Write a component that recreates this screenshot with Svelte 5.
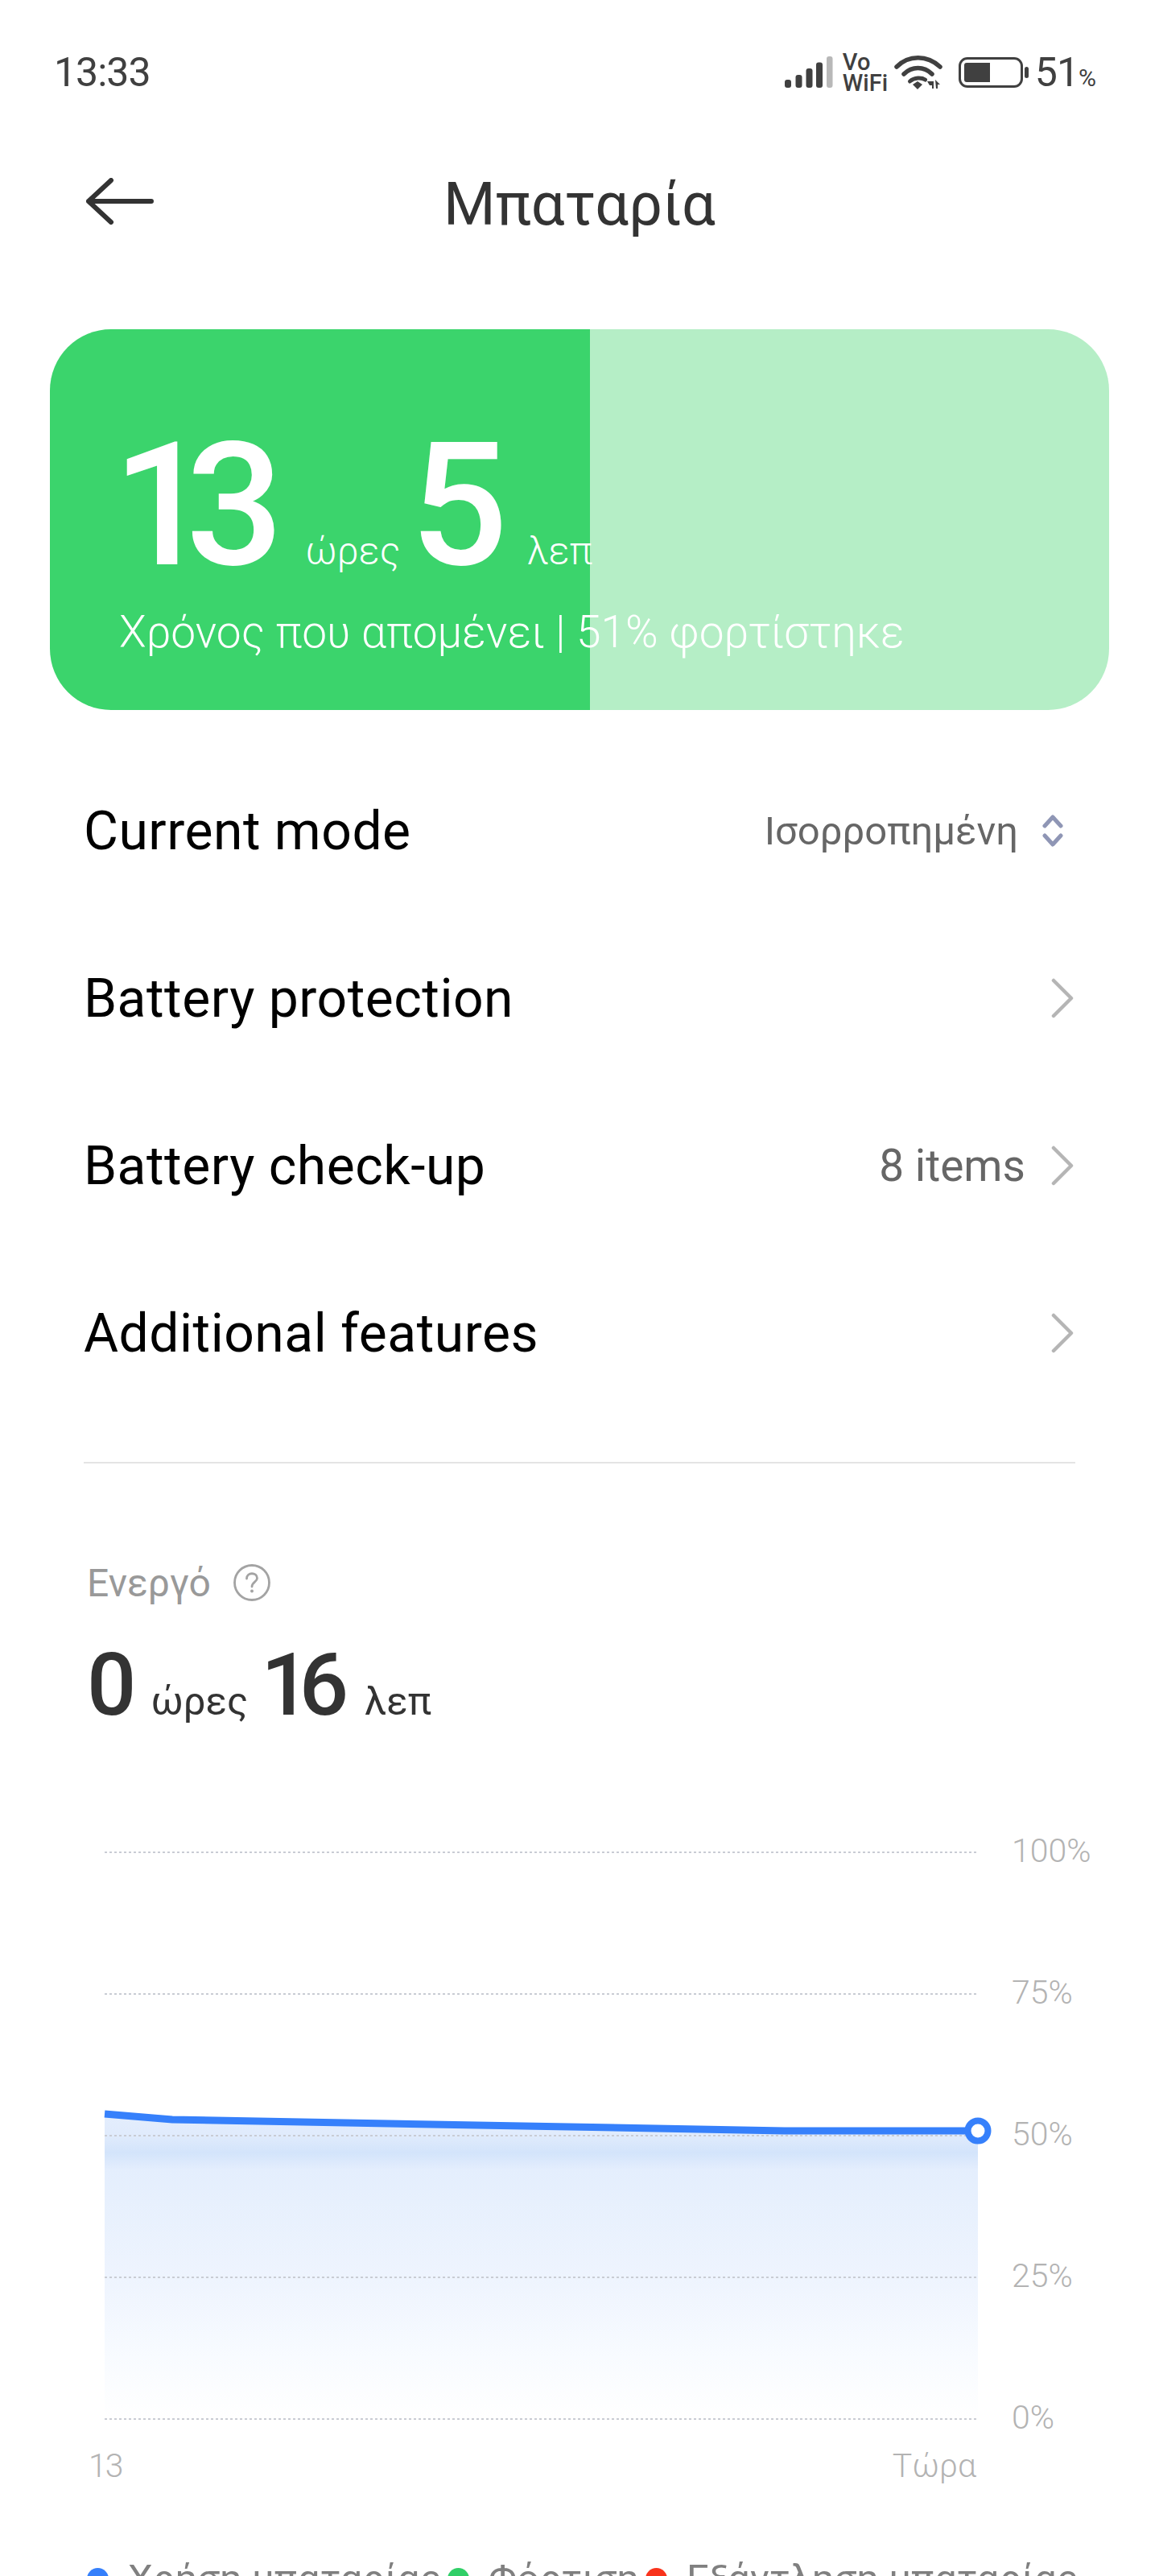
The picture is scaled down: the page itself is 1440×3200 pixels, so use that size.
<script>
  const rows = [
    { label: 'Battery protection', value: '' },
    { label: 'Battery check-up', value: '8 items' },
    { label: 'Additional features', value: '' }
  ];
  const gridYs = [8, 184, 360, 536, 712];
  const axis = ['100%', '75%', '50%', '25%', '0%'];
  const legend = [
    { color: '#3680fb', text: 'Χρήση μπαταρίας' },
    { color: '#31cf68', text: 'Φόρτιση' },
    { color: '#f9331c', text: 'Εξάντληση μπαταρίας' }
  ];
</script>

<div class="page">
  <div class="status">
    <span class="time">13:33</span>
    <div class="status-right">
      <svg class="signal" width="60" height="40" viewBox="0 0 60 40">
        <rect x="0" y="29" width="8" height="10" rx="3" fill="#404040" />
        <rect x="13.500" y="23" width="8" height="16" rx="3" fill="#404040" />
        <rect x="26.500" y="15" width="8" height="24" rx="3" fill="#404040" />
        <rect x="39" y="7.500" width="8" height="31.500" rx="3" fill="#404040" />
        <rect x="52" y="0" width="7.500" height="39" rx="3" fill="#b8b8b8" />
      </svg>
      <div class="vowifi"><span>Vo</span><span>WiFi</span></div>
      <svg class="wifi" width="60" height="44" viewBox="0 0 60 44">
        <path d="M3 15 C18 0 41 0 57 15" fill="none" stroke="#404040" stroke-width="5.500" stroke-linecap="round" />
        <path d="M12 24 C22 14 37 14 47 24" fill="none" stroke="#404040" stroke-width="5.500" stroke-linecap="round" />
        <path d="M19.500 33 C25 28 34 28 38.500 31" fill="none" stroke="#404040" stroke-width="5" stroke-linecap="round" />
        <path d="M23 37 L29 33 L35 37 L29 43 Z" fill="#404040" />
        <path d="M41 33 h8 v9 h-2 v-4 l-3 0 z" fill="#404040" />
        <path d="M51 31 l6 6 h-3 v5 h-2 z" fill="#404040" />
      </svg>
      <div class="battery"><div class="battery-body"><div class="battery-level"></div></div><div class="battery-nub"></div></div>
      <span class="batt-text">51<small>%</small></span>
    </div>
  </div>

  <header class="nav">
    <svg class="back" width="84" height="58" viewBox="0 0 84 58">
      <path d="M3 29 H81 M31 3 L3 29 L31 55" fill="none" stroke="#333" stroke-width="6" stroke-linecap="round" stroke-linejoin="round" />
    </svg>
    <h1>Μπαταρία</h1>
  </header>

  <section class="hero">
    <div class="hero-time">
      <span class="big n13">13</span><span class="unit u1">ώρες</span><span class="big n5">5</span><span class="unit u2">λεπ</span>
    </div>
    <div class="hero-sub">Χρόνος που απομένει | 51% φορτίστηκε</div>
  </section>

  <div class="list">
    <div class="row">
      <span class="label">Current mode</span>
      <span class="value mode">Ισορροπημένη
        <svg width="26" height="40" viewBox="0 0 26 40">
          <path d="M3 14 L13 3 L23 14 M3 26 L13 37 L23 26" fill="none" stroke="#8f96b5" stroke-width="5" stroke-linecap="round" stroke-linejoin="round" />
        </svg>
      </span>
    </div>
    {#each rows as r}
      <div class="row">
        <span class="label">{r.label}</span>
        <span class="value chev">
          {#if r.value}<span class="count">{r.value}</span>{/if}
          <svg width="28" height="50" viewBox="0 0 28 50">
            <path d="M3 3 L25 25 L3 47" fill="none" stroke="#b5b5b5" stroke-width="4.500" stroke-linecap="round" stroke-linejoin="round" />
          </svg>
        </span>
      </div>
    {/each}
  </div>

  <div class="divider"></div>

  <section class="active">
    <div class="active-title">
      <span>Ενεργό</span>
      <svg width="46" height="46" viewBox="0 0 46 46">
        <circle cx="23" cy="23" r="21.500" fill="none" stroke="#a3a3a3" stroke-width="2.800" />
        <path d="M16.500 18 C16.500 9.500 29.500 10 29.500 17.500 C29.500 22 23 22.500 23 28" fill="none" stroke="#a3a3a3" stroke-width="2.800" stroke-linecap="round" />
        <circle cx="23" cy="33.500" r="2" fill="#a3a3a3" />
      </svg>
    </div>
    <div class="active-time">
      <span class="mid">0</span><span class="munit a">ώρες</span><span class="mid m16">16</span><span class="munit b">λεπ</span>
    </div>
  </section>

  <section class="chart">
    <div class="plot-row">
      <svg class="plot" width="1100" height="720" viewBox="0 0 1100 720">
        <defs>
          <linearGradient id="area" gradientUnits="userSpaceOnUse" x1="0" y1="325" x2="0" y2="712">
            <stop offset="0" stop-color="#e5eefd" />
            <stop offset="0.09" stop-color="#e0ebfc" />
            <stop offset="0.145" stop-color="#d3e4fb" />
            <stop offset="0.2" stop-color="#e4eefd" />
            <stop offset="0.3" stop-color="#e7f0fd" />
            <stop offset="0.55" stop-color="#eef4fe" />
            <stop offset="0.8" stop-color="#f8fbff" />
            <stop offset="1" stop-color="#ffffff" />
          </linearGradient>
        </defs>
        <path d="M0 333 L84 340 L845 354 L1085 354 L1085 712 L0 712 Z" fill="url(#area)" />
        {#each gridYs as y}
          <line x1="0" x2="1083" y1={y} y2={y} stroke="#c9ccd4" stroke-width="2" stroke-dasharray="3 3" />
        {/each}
        <path d="M0 333 L84 340 L845 354 L1085 354" fill="none" stroke="#3680fb" stroke-width="9" />
        <circle cx="1085" cy="354" r="12.500" fill="#fff" stroke="#3680fb" stroke-width="8" />
      </svg>
      <div class="axis-y">
        {#each axis as a}<span>{a}</span>{/each}
      </div>
    </div>
    <div class="axis-x"><span class="first">13</span><span>Τώρα</span></div>
    <div class="legend">
      {#each legend as l}
        <div class="legend-item"><i style="background:{l.color}"></i><span>{l.text}</span></div>
      {/each}
    </div>
  </section>
</div>

<style>
  :global(body) { margin: 0; background: #fff; }
  .page {
    width: 1440px;
    height: 3200px;
    overflow: hidden;
    background: #fff;
    font-family: Roboto, "Noto Sans", sans-serif;
    color: #000;
  }
  .status {
    height: 180px;
    padding: 0 79px 0 67px;
    box-sizing: border-box;
    display: flex;
    align-items: center;
    justify-content: space-between;
  }
  .time { font-size: 50px; color: #404040; letter-spacing: -1px; }
  .status-right { display: flex; align-items: center; }
  .signal { margin-right: 12px; }
  .vowifi {
    display: flex;
    flex-direction: column;
    font-size: 29px;
    font-weight: 500;
    line-height: 26px;
    color: #404040;
    width: 64px;
  }
  .wifi { margin-right: 20px; }
  .battery { display: flex; align-items: center; margin-right: 8px; }
  .battery-body {
    width: 80px;
    height: 38px;
    box-sizing: border-box;
    border: 3.500px solid #404040;
    border-radius: 11px;
    padding: 4px;
  }
  .battery-level { width: 32px; height: 100%; background: #404040; border-radius: 3px 0 0 3px; }
  .battery-nub { width: 5px; height: 14px; background: #404040; border-radius: 3px; margin-left: 2px; }
  .batt-text { font-size: 50px; color: #404040; letter-spacing: -1px; }
  .batt-text small { font-size: 30px; }

  .nav {
    height: 140px;
    display: flex;
    align-items: center;
    justify-content: center;
    position: relative;
  }
  .back { position: absolute; left: 107px; top: 41px; }
  h1 { margin: 6px 0 0; font-size: 74px; font-weight: 400; color: #333; }

  .hero {
    margin: 89px 62px 0 62px;
    height: 473px;
    box-sizing: border-box;
    border-radius: 76px;
    background: linear-gradient(90deg, #3bd46c 51%, #b5eec6 51%);
    color: #fff;
    padding: 112px 0 0 78px;
    overflow: hidden;
  }
  .hero-time { display: flex; align-items: baseline; height: 214px; line-height: 214px; }
  .big { font-size: 214px; font-weight: 500; }
  .n13 { letter-spacing: -31px; }
  .n5 { margin-left: 12px; }
  .unit { font-size: 48px; font-weight: 300; white-space: nowrap; }
  .u1 { margin-left: 58px; }
  .u2 { margin-left: 24px; }
  .hero-sub { font-size: 55px; font-weight: 300; white-space: nowrap; margin-top: 18px; margin-left: 8px; }

  .list { margin-top: 46px; padding: 0 104px; }
  .row {
    height: 208px;
    display: flex;
    align-items: center;
    justify-content: space-between;
  }
  .label { font-size: 66px; letter-spacing: 0.5px; color: #000; }
  .value { display: flex; align-items: center; color: #666; font-size: 49px; }
  .mode { gap: 30px; margin-right: 15px; }
  .mode svg { flex: none; }
  .chev { margin-right: 2px; }
  .count { margin-right: 32px; font-size: 55px; }
  .value > svg { display: block; }

  .divider { height: 2px; background: #e4e4e4; margin: 56px 104px 0; }

  .active { padding: 118px 0 0 108px; }
  .active-title { display: flex; align-items: center; gap: 28px; font-size: 48px; color: #999; height: 60px; }
  .active-time { display: flex; align-items: baseline; margin-top: 34px; height: 110px; color: #333; }
  .mid { font-size: 108px; font-weight: 500; }
  .m16 { letter-spacing: -14px; }
  .munit { font-size: 49px; color: #333; }
  .a { margin: 0 16px 0 18px; }
  .b { margin-left: 34px; }

  .chart { padding: 153px 0 0 130px; position: relative; }
  .plot-row { display: flex; height: 720px; }
  .plot { flex: none; overflow: visible; }
  .axis-y {
    margin-left: 27px;
    height: 704px;
    margin-top: 6px;
    display: flex;
    flex-direction: column;
    justify-content: space-between;
    font-size: 41px;
    font-weight: 300;
    color: #b3b3b3;
  }
  .axis-y span { height: 0; line-height: 0; }
  .axis-x {
    display: flex;
    justify-content: space-between;
    width: 1103px;
    margin-left: -20px;
    font-size: 41px;
    font-weight: 300;
    color: #b3b3b3;
    margin-top: 20px;
    height: 60px;
    line-height: 60px;
  }
  .first { letter-spacing: -2px; }
  .legend {
    display: flex;
    margin-left: -22px;
    margin-top: 82px;
    gap: 8px;
    font-size: 49px;
    color: #808080;
    white-space: nowrap;
  }
  .legend-item { display: flex; align-items: center; gap: 24px; }
  .legend-item i { width: 27px; height: 27px; border-radius: 50%; display: block; flex: none; }
</style>
